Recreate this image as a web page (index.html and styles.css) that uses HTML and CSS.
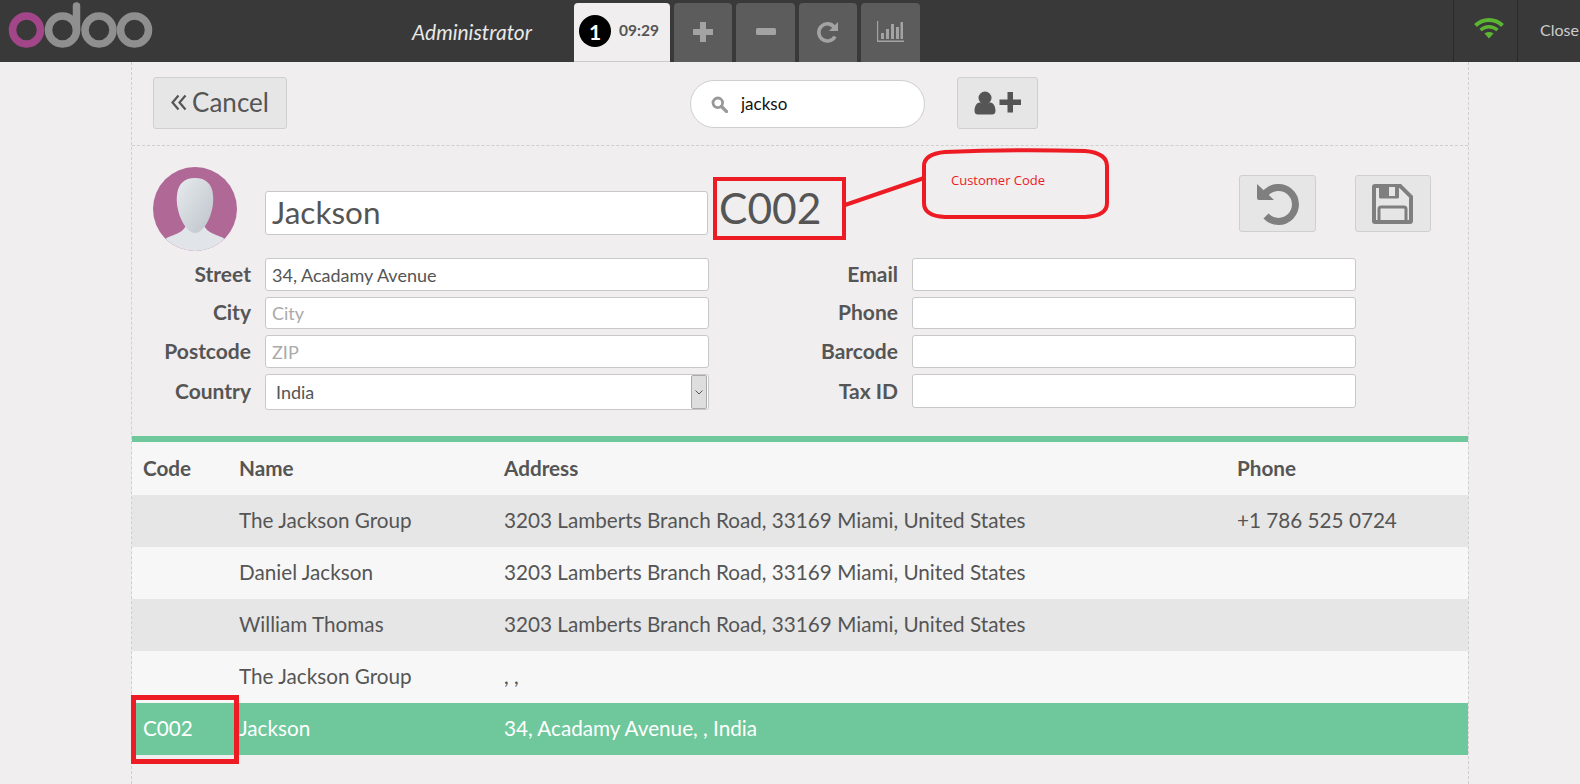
FILE: index.html
```html
<!DOCTYPE html>
<html lang="en">
<head>
    <meta charset="UTF-8">
    <meta name="viewport" content="width=device-width, initial-scale=1.0">
    <title>Odoo POS - Customers</title>
    <link rel="stylesheet" href="styles.css">
</head>
<body>
    <header class="topbar">
        <div class="brand">
            <svg class="logo" width="160" height="62" viewBox="0 0 160 62">
                <circle cx="26.5" cy="30" r="14" fill="none" stroke="#a24689" stroke-width="7.5"/>
                <circle cx="62.5" cy="30" r="14" fill="none" stroke="#8f8f8f" stroke-width="7.5"/>
                <line x1="76.5" y1="6" x2="76.5" y2="30" stroke="#8f8f8f" stroke-width="7.5" stroke-linecap="round"/>
                <circle cx="99" cy="30" r="14" fill="none" stroke="#8f8f8f" stroke-width="7.5"/>
                <circle cx="134.5" cy="30" r="14" fill="none" stroke="#8f8f8f" stroke-width="7.5"/>
            </svg>
            <span class="username">Administrator</span>
        </div>
        <div class="tabs">
            <div class="tab tab-active">
                <span class="tab-badge">1</span>
                <span class="tab-time">09:29</span>
            </div>
            <div class="tab tab-w58">
                <svg width="20" height="20" viewBox="0 0 20 20"><path d="M7 0h6v7h7v6h-7v7H7v-7H0V7h7z" fill="#a3a3a3"/></svg>
            </div>
            <div class="tab tab-w59">
                <svg width="20" height="7" viewBox="0 0 20 7"><rect width="20" height="7" rx="1.5" fill="#a3a3a3"/></svg>
            </div>
            <div class="tab tab-w58">
                <svg width="22" height="22" viewBox="0 0 22 22"><path d="M17.5 6.5A8.6 8.6 0 1 0 18 15.5" fill="none" stroke="#a3a3a3" stroke-width="3.6"/><path d="M21 1v9h-9z" fill="#a3a3a3"/></svg>
            </div>
            <div class="tab tab-w59">
                <svg width="27" height="21" viewBox="0 0 27 21"><path d="M0 0h1.2v19.5H27V21H0z" fill="#a3a3a3"/><path d="M4 12h3v6H4zM9 8h3v10H9zM14 3h3v15h-3zM19 6h3v12h-3zM23.5 1h2.500v17h-2.500z" fill="#a3a3a3"/></svg>
            </div>
        </div>
        <div class="status">
            <svg width="30" height="22" viewBox="0 0 30 22">
                <path d="M1.500 8.500C9 1 21 1 28.500 8.500" fill="none" stroke="#5cb531" stroke-width="4"/>
                <path d="M6.500 13C11.500 8.500 18.500 8.500 23.500 13" fill="none" stroke="#5cb531" stroke-width="3.500"/>
                <path d="M10.500 16.500C13 14.500 17 14.500 19.500 16.500L15 21.500z" fill="#5cb531"/>
            </svg>
        </div>
        <div class="close-btn">Close</div>
    </header>

    <main class="screen">
        <div class="actions">
            <button class="btn btn-cancel" type="button">
                <svg width="16" height="17" viewBox="0 0 16 17"><path d="M7.500 1.500L1.500 8.500l6 7M14.500 1.500l-6 7 6 7" fill="none" stroke="#555" stroke-width="2.200"/></svg>
                Cancel
            </button>
            <div class="search">
                <svg width="17" height="17" viewBox="0 0 17 17"><circle cx="6.800" cy="6.800" r="4.800" fill="none" stroke="#999" stroke-width="2.800"/><line x1="10.500" y1="10.500" x2="15.500" y2="15.500" stroke="#999" stroke-width="3.200" stroke-linecap="round"/></svg>
                <input class="search-input" type="text" value="jackso">
            </div>
            <button class="btn btn-new" type="button">
                <svg width="48" height="24" viewBox="0 0 48 24">
                    <circle cx="11" cy="7" r="6.500" fill="#555"/>
                    <path d="M0.500 20c0-6 3-8.500 5.500-8.500 1.500 1.500 8.500 1.500 10 0 2.500 0 5.500 2.500 5.500 8.500 0 2.500-1.500 3.500-3.500 3.500H4c-2 0-3.500-1-3.500-3.500z" fill="#555"/>
                    <path d="M33.500 1h5.500v7.500h8v5.500h-8V21.500h-5.500v-7.500h-8v-5.500h8z" fill="#555"/>
                </svg>
            </button>
        </div>

        <section class="details">
            <div class="details-head">
                <svg class="avatar" width="84" height="84" viewBox="0 0 84 84">
                    <defs>
                        <clipPath id="avatarClip"><circle cx="42" cy="42" r="42"/></clipPath>
                        <linearGradient id="faceFill" x1="0" y1="0" x2="1" y2="1">
                            <stop offset="0" stop-color="#e8ebee"/>
                            <stop offset="1" stop-color="#bcc3ca"/>
                        </linearGradient>
                    </defs>
                    <g clip-path="url(#avatarClip)">
                        <rect width="84" height="84" fill="#b06896"/>
                        <path d="M0 84V82L12 72C20 67 30 67 33 58H51C54 67 64 67 72 72L84 82V84z" fill="#e1e4e8"/>
                        <path d="M42 11C31 11 25 17 24 28C23 36 25 46 29 54C32 60 37 66 42 66C47 66 52 60 55 54C59 46 61 36 60 28C59 17 53 11 42 11z" fill="url(#faceFill)"/>
                    </g>
                </svg>
                <input class="field field-name" type="text" value="Jackson">
                <span class="customer-code">C002</span>
                <button class="btn btn-icon btn-undo" type="button">
                    <svg width="42" height="42" viewBox="0 0 42 42">
                        <path d="M8 11A17 17 0 1 1 9 33" fill="none" stroke="#7f7f7f" stroke-width="7"/>
                        <path d="M0 1L17 17H2a2 2 0 0 1-2-2z" fill="#7f7f7f"/>
                    </svg>
                </button>
                <button class="btn btn-icon btn-save" type="button">
                    <svg width="42" height="42" viewBox="0 0 42 42">
                        <path d="M3 1H29L41 13V38a3 3 0 0 1-3 3H3a3 3 0 0 1-3-3V4a3 3 0 0 1 3-3z" fill="#7f7f7f"/>
                        <path d="M4 5V37H37V14.500L27.500 5z" fill="#e6e6e6"/>
                        <path d="M7 3H27V14a1.500 1.500 0 0 1-1.500 1.500H8.500A1.500 1.500 0 0 1 7 14z" fill="#7f7f7f"/>
                        <rect x="17" y="4" width="6" height="9" fill="#e6e6e6"/>
                        <path d="M7 38V26a2 2 0 0 1 2-2H32a2 2 0 0 1 2 2V38" fill="none" stroke="#7f7f7f" stroke-width="3"/>
                    </svg>
                </button>
            </div>
            <div class="fields">
                <label class="field-label">Street</label>
                <input class="field" type="text" value="34, Acadamy Avenue">
                <label class="field-label">Email</label>
                <input class="field" type="text">
                <label class="field-label">City</label>
                <input class="field" type="text" placeholder="City">
                <label class="field-label">Phone</label>
                <input class="field" type="text">
                <label class="field-label">Postcode</label>
                <input class="field" type="text" placeholder="ZIP">
                <label class="field-label">Barcode</label>
                <input class="field" type="text">
                <label class="field-label">Country</label>
                <div class="field select-wrap">
                    <select class="select">
                        <option>India</option>
                    </select>
                    <span class="select-arrow">
                        <svg width="8" height="5" viewBox="0 0 8 5"><path d="M0.500 0.500L4 4l3.500-3.500" fill="none" stroke="#555"/></svg>
                    </span>
                </div>
                <label class="field-label">Tax ID</label>
                <input class="field field-tax" type="text">
            </div>
        </section>

        <table class="clients">
            <colgroup>
                <col class="col-code">
                <col class="col-name">
                <col class="col-address">
                <col>
            </colgroup>
            <thead>
                <tr>
                    <th>Code</th>
                    <th>Name</th>
                    <th>Address</th>
                    <th>Phone</th>
                </tr>
            </thead>
            <tbody>
                <tr>
                    <td></td>
                    <td>The Jackson Group</td>
                    <td>3203 Lamberts Branch Road, 33169 Miami, United States</td>
                    <td>+1 786 525 0724</td>
                </tr>
                <tr>
                    <td></td>
                    <td>Daniel Jackson</td>
                    <td>3203 Lamberts Branch Road, 33169 Miami, United States</td>
                    <td></td>
                </tr>
                <tr>
                    <td></td>
                    <td>William Thomas</td>
                    <td>3203 Lamberts Branch Road, 33169 Miami, United States</td>
                    <td></td>
                </tr>
                <tr>
                    <td></td>
                    <td>The Jackson Group</td>
                    <td>, ,</td>
                    <td></td>
                </tr>
                <tr class="selected">
                    <td>C002</td>
                    <td>Jackson</td>
                    <td>34, Acadamy Avenue, , India</td>
                    <td></td>
                </tr>
            </tbody>
        </table>
    </main>

    <!-- red markup drawn on top of the screenshot -->
    <svg class="markup" width="1580" height="784" viewBox="0 0 1580 784">
        <rect x="715" y="179" width="129" height="59" fill="none" stroke="#ed1c24" stroke-width="4"/>
        <line x1="845" y1="205" x2="924" y2="178" stroke="#ed1c24" stroke-width="4"/>
        <path d="M924 166Q924 154 945 152Q1015 149 1085 151Q1107 153 1107 166V203Q1107 216 1085 217H945Q924 216 924 203z" fill="none" stroke="#ed1c24" stroke-width="4"/>
        <rect x="133.500" y="697.500" width="103" height="64" fill="none" stroke="#ed1c24" stroke-width="5"/>
    </svg>
    <span class="markup-note">Customer Code</span>
</body>
</html>
```

FILE: styles.css
```css
html, body {
    height: 100%;
}

body {
    margin: 0;
    width: 1580px;
    height: 784px;
    overflow: hidden;
    position: relative;
    font-family: "Lato", sans-serif;
    background-color: #f0eeef;
    color: #555;
}

/* top bar */
.topbar {
    display: flex;
    height: 62px;
    background-color: #393939;
}

.brand {
    display: flex;
    align-items: center;
    width: 574px;
    flex-shrink: 0;
}

.logo {
    flex-shrink: 0;
    margin-right: 252px;
}

.username {
    font-style: italic;
    font-size: 21px;
    color: #e8e8e8;
    white-space: nowrap;
}

.tabs {
    display: flex;
    align-items: flex-end;
    gap: 4px;
    flex: 1;
}

.tab {
    display: flex;
    align-items: center;
    justify-content: center;
    height: 59px;
    padding-bottom: 2px;
    box-sizing: border-box;
    background-color: #5c5c5c;
    border-radius: 4px 4px 0 0;
}

.tab-w58 {
    width: 58px;
}

.tab-w59 {
    width: 59px;
}

.tab-active {
    width: 96px;
    justify-content: flex-start;
    padding-left: 5px;
    background-color: #f0eeef;
    border-bottom: 1px solid #ccc;
}

.tab-badge {
    display: flex;
    align-items: center;
    justify-content: center;
    width: 32px;
    height: 32px;
    border-radius: 50%;
    background-color: #000;
    color: #fff;
    font-size: 21px;
    font-weight: 700;
}

.tab-time {
    margin-left: 8px;
    margin-bottom: 3px;
    font-size: 15.5px;
    font-weight: 700;
}

.status {
    display: flex;
    align-items: center;
    justify-content: center;
    width: 64px;
    padding: 0 0 6px 6px;
    box-sizing: border-box;
    border-left: 1px solid #2a2a2a;
}

.close-btn {
    width: 63px;
    padding-left: 22px;
    box-sizing: border-box;
    border-left: 1px solid #2a2a2a;
    color: #ccc;
    font-size: 16px;
    line-height: 60px;
    white-space: nowrap;
}

/* main panel */
.screen {
    width: 1338px;
    height: 722px;
    margin-left: 131px;
    box-sizing: border-box;
    border-left: 1px dashed #cfcfcf;
    border-right: 1px dashed #cfcfcf;
}

.actions {
    display: flex;
    align-items: flex-start;
    height: 84px;
    padding: 15px 0 0 21px;
    box-sizing: border-box;
    border-bottom: 1px dashed #cfcfcf;
}

.btn {
    display: flex;
    align-items: center;
    justify-content: center;
    padding: 0;
    font-family: inherit;
    color: #555;
    background-color: #e6e6e6;
    border: 1px solid #cfcfcf;
    border-radius: 3px;
}

.btn-cancel {
    gap: 5px;
    width: 134px;
    height: 52px;
    padding-bottom: 2px;
    font-size: 26px;
}

.search {
    display: flex;
    align-items: center;
    width: 235px;
    height: 48px;
    margin: 3px 32px 0 403px;
    padding-left: 20px;
    box-sizing: border-box;
    background-color: #fff;
    border: 1px solid #cfcfcf;
    border-radius: 24px;
}

.search-input {
    width: 150px;
    margin-left: 13px;
    padding: 0 0 2px;
    border: none;
    outline: none;
    background: none;
    font-family: inherit;
    font-size: 17px;
    color: #111;
}

.btn-new {
    width: 81px;
    height: 52px;
}

/* customer form */
.details-head {
    display: flex;
    align-items: flex-start;
    height: 112px;
}

.avatar {
    flex-shrink: 0;
    margin: 21px 0 0 21px;
}

.field {
    height: 100%;
    padding: 0 6px;
    box-sizing: border-box;
    font-family: inherit;
    font-size: 18px;
    color: #555;
    background-color: #fff;
    border: 1px solid #c8c8c8;
    border-radius: 3px;
    outline: none;
}

.field::placeholder {
    color: #aaa;
}

.field-name {
    width: 443px;
    height: 44px;
    margin: 45px 0 0 28px;
    padding-bottom: 3px;
    font-size: 31.5px;
}

.customer-code {
    width: 520px;
    margin: 32px 0 0 11px;
    font-size: 42.5px;
    line-height: 60px;
    flex-shrink: 0;
}

.btn-icon {
    flex-shrink: 0;
    height: 57px;
    margin-top: 29px;
}

.btn-undo {
    width: 77px;
}

.btn-save {
    width: 76px;
    margin-left: 39px;
}

.fields {
    display: grid;
    grid-template-columns: 133px 444px 203px 444px;
    grid-template-rows: 33px 32px 33px 36px;
    row-gap: 6px;
}

.field-label {
    display: flex;
    align-items: center;
    justify-content: flex-end;
    padding: 0 14px 3px 0;
    font-size: 21px;
    font-weight: 700;
    white-space: nowrap;
}

.field-tax {
    height: 34px;
}

.select-wrap {
    display: flex;
    padding: 0 1px 0 0;
}

.select {
    flex: 1;
    padding: 0 10px;
    border: none;
    outline: none;
    background: none;
    appearance: none;
    font-family: inherit;
    font-size: 18px;
    color: #555;
}

.select-arrow {
    display: flex;
    align-items: center;
    justify-content: center;
    width: 16px;
    background-color: #dedede;
    border: 1px solid #aaa;
    border-radius: 2px;
    box-sizing: border-box;
}

/* customer list */
.clients {
    width: 100%;
    margin-top: 26px;
    border-collapse: collapse;
    table-layout: fixed;
    border-top: 6px solid #6ec89b;
    font-size: 20.7px;
}

.col-code {
    width: 107px;
}

.col-name {
    width: 265px;
}

.col-address {
    width: 733px;
}

.clients th,
.clients td {
    height: 52px;
    padding: 0 0 2px 0;
    box-sizing: border-box;
    text-align: left;
    white-space: nowrap;
}

.clients th {
    height: 56px;
    font-weight: 700;
}

.clients th:first-child,
.clients td:first-child {
    padding-left: 11px;
}

.clients thead tr,
.clients tbody tr {
    background-color: #f7f7f7;
}

.clients tbody tr:nth-child(odd) {
    background-color: #e6e6e6;
}

.clients tbody tr.selected {
    background-color: #6ec89b;
    color: #fff;
}

/* red markup */
.markup {
    position: absolute;
    top: 0;
    left: 0;
    pointer-events: none;
}

.markup-note {
    position: absolute;
    top: 171px;
    left: 951px;
    font-family: "Open Sans", sans-serif;
    font-size: 13px;
    color: #ed1c24;
}
```
